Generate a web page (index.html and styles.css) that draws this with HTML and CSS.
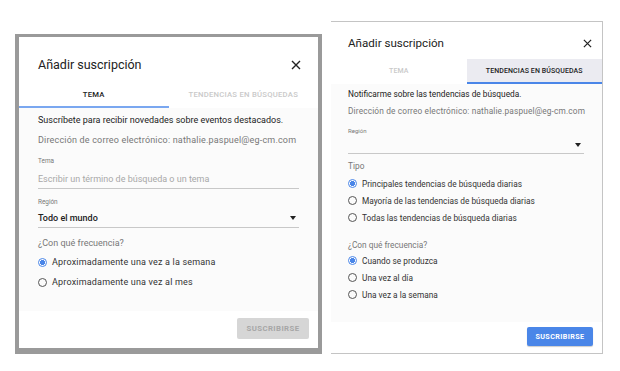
FILE: index.html
```html
<!DOCTYPE html>
<html lang="es">
<head>
<meta charset="utf-8">
<link rel="stylesheet" href="styles.css">
</head>
<body>
<div class="stage">
  <section class="dlg dlg-left">
    <div class="hdr">
      <span class="title">Añadir suscripción</span>
      <svg class="close" viewBox="0 0 10 10" width="10" height="10"><path d="M1 1L9 9M9 1L1 9" stroke="#222" stroke-width="1.4" fill="none"/></svg>
    </div>
    <div class="tabs">
      <div class="tab active">TEMA</div>
      <div class="tab">TENDENCIAS EN BÚSQUEDAS</div>
    </div>
    <div class="body">
      <div class="txt dark">Suscríbete para recibir novedades sobre eventos destacados.</div>
      <div class="txt grey mail">Dirección de correo electrónico: nathalie.paspuel@eg-cm.com</div>
      <div class="lbl l-tema">Tema</div>
      <div class="field placeholder">Escribir un término de búsqueda o un tema</div>
      <div class="lbl l-reg">Región</div>
      <div class="field select"><span class="sel-val">Todo el mundo</span><span class="arrow"></span></div>
      <div class="txt grey q">¿Con qué frecuencia?</div>
      <div class="radio on"><span class="dot"></span>Aproximadamente una vez a la semana</div>
      <div class="radio"><span class="dot"></span>Aproximadamente una vez al mes</div>
    </div>
    <div class="foot">
      <button class="btn disabled">SUSCRIBIRSE</button>
    </div>
  </section>

  <section class="dlg dlg-right">
    <div class="hdr">
      <span class="title">Añadir suscripción</span>
      <svg class="close" viewBox="0 0 10 10" width="9" height="9"><path d="M1 1L9 9M9 1L1 9" stroke="#222" stroke-width="1.4" fill="none"/></svg>
    </div>
    <div class="tabs">
      <div class="tab">TEMA</div>
      <div class="tab active">TENDENCIAS EN BÚSQUEDAS</div>
    </div>
    <div class="body">
      <div class="txt dark r1">Notificarme sobre las tendencias de búsqueda.</div>
      <div class="txt grey mail">Dirección de correo electrónico: nathalie.paspuel@eg-cm.com</div>
      <div class="lbl r-reg">Región</div>
      <div class="field select r-sel"><span class="sel-val"></span><span class="arrow"></span></div>
      <div class="txt grey r-tipo">Tipo</div>
      <div class="radio on"><span class="dot"></span>Principales tendencias de búsqueda diarias</div>
      <div class="radio"><span class="dot"></span>Mayoría de las tendencias de búsqueda diarias</div>
      <div class="radio"><span class="dot"></span>Todas las tendencias de búsqueda diarias</div>
      <div class="txt grey r-q">¿Con qué frecuencia?</div>
      <div class="radio on"><span class="dot"></span>Cuando se produzca</div>
      <div class="radio"><span class="dot"></span>Una vez al día</div>
      <div class="radio"><span class="dot"></span>Una vez a la semana</div>
    </div>
    <div class="foot">
      <button class="btn primary">SUSCRIBIRSE</button>
    </div>
  </section>
</div>
</body>
</html>
```
FILE: styles.css
```css
* { box-sizing: border-box; }
html, body { margin: 0; padding: 0; background: #fff; }
body { font-family: Roboto, "Noto Sans", Arial, sans-serif; color: #212121; width: 620px; height: 371px; overflow: hidden; }
.stage { display: flex; align-items: flex-start; padding-left: 15px; }

.dlg { display: flex; flex-direction: column; background: #fff; }
.dlg > * { flex: none; }
.dlg > .body { flex: 1 1 auto; }
.body > * { white-space: nowrap; }

/* left dialog */
.dlg-left {
  margin-top: 34px;
  width: 307px;
  height: 320px;
  border-style: solid;
  border-color: #9a9a9a;
  border-width: 3px 4px 6px 4px;
}
.dlg-left .hdr { height: 45px; padding: 20px 17px 0 19px; display: flex; justify-content: space-between; align-items: flex-start; }
.dlg-left .title { font-size: 12.5px; line-height: 16px; color: #222; }
.dlg-left .close { margin-top: 3px; }
.dlg-left .tabs { height: 26px; }
.dlg-left .tab { font-size: 7.7px; letter-spacing: 0.25px; }
.dlg-left .body { padding: 2px 19px 0 19px; background: #fbfbfb; }
.dlg-left .txt { font-size: 9px; line-height: 20px; }
.dlg-left .mail { letter-spacing: 0.18px; }
.dlg-left .lbl { font-size: 6.4px; line-height: 14px; color: #777; }
.dlg-left .l-tema { margin-top: 4px; }
.dlg-left .l-reg { margin-top: 6px; }
.dlg-left .field { margin-top: 2px; height: 19px; line-height: 18px; font-size: 9px; border-bottom: 1px solid #c8c8c8; }
.dlg-left .l-reg + .field { margin-top: 0; }
.dlg-left .q { margin-top: 6px; line-height: 18px; }
.dlg-left .radio { height: 20px; font-size: 9px; letter-spacing: 0.18px; }
.dlg-left .foot { padding: 7px 9px 9px; display: flex; justify-content: flex-end; background: #fff; }
.dlg-left .btn { width: 72px; height: 21px; font-size: 7.8px; }

/* right dialog */
.dlg-right {
  margin-top: 21px;
  margin-left: 9px;
  width: 272px;
  height: 333px;
  border-top: 1px solid #c4c4c4;
  border-right: 1px solid #c4c4c4;
  border-bottom: 1px solid #c4c4c4;
}
.dlg-right .hdr { height: 37px; padding: 13px 10px 0 17px; display: flex; justify-content: space-between; align-items: flex-start; }
.dlg-right .title { font-size: 11.6px; line-height: 16px; color: #222; }
.dlg-right .close { margin-top: 4px; }
.dlg-right .tabs { height: 25px; }
.dlg-right .body { padding: 2px 17px 0 17px; background: #fbfbfb; }
.dlg-right .txt { font-size: 8.3px; line-height: 17px; }
.dlg-right .mail { letter-spacing: 0.15px; }
.dlg-right .lbl { font-size: 6px; line-height: 12px; color: #777; }
.dlg-right .r-reg { margin-top: 5px; }
.dlg-right .field { height: 17px; border-bottom: 1px solid #c8c8c8; margin-right: 1px; }
.dlg-right .r-tipo { margin-top: 4px; }
.dlg-right .radio { height: 17px; font-size: 8.3px; }
.dlg-right .r-q { margin-top: 9px; line-height: 13px; padding-top: 4px; }
.dlg-right .foot { padding: 5px 9px 7px; display: flex; justify-content: flex-end; background: #fff; }
.dlg-right .btn { width: 66px; height: 19px; font-size: 7.2px; }

/* shared */
.tabs { display: flex; }
.tab { flex: 1; display: flex; align-items: center; justify-content: center; font-size: 7px; font-weight: 500; color: #c9c9c9; letter-spacing: 0.1px; border-bottom: 2px solid transparent; white-space: nowrap; }
.tab.active { color: #222; border-bottom-color: #7aa7f0; }
.dlg-right .tab.active { background: #ebebf1; border-bottom-color: #4a86e8; }
.dark { color: #222; }
.grey { color: #777; }
.placeholder { color: #a8a8a8; }
.select { display: flex; justify-content: space-between; align-items: center; }
.sel-val { font-weight: 500; color: #222; }
.arrow { width: 0; height: 0; border-left: 3.5px solid transparent; border-right: 3.5px solid transparent; border-top: 4px solid #222; margin-right: 3px; }
.radio { display: flex; align-items: center; color: #333; }
.dot { width: 9px; height: 9px; border-radius: 50%; border: 1.2px solid #555; margin: 0 5px 0 0; flex: none; }
.radio.on .dot { border-color: #4a86e8; background: radial-gradient(circle, #4a86e8 0 2.3px, #fff 2.8px); }
.btn { border: none; border-radius: 2px; font-family: Roboto, Arial, sans-serif; font-weight: 700; letter-spacing: 0.4px; padding: 0; }
.btn.disabled { background: #d6d6d6; color: #a6a6a6; }
.btn.primary { background: #4a86e8; color: #fff; box-shadow: 0 1px 1px rgba(0,0,0,0.2); }
```
